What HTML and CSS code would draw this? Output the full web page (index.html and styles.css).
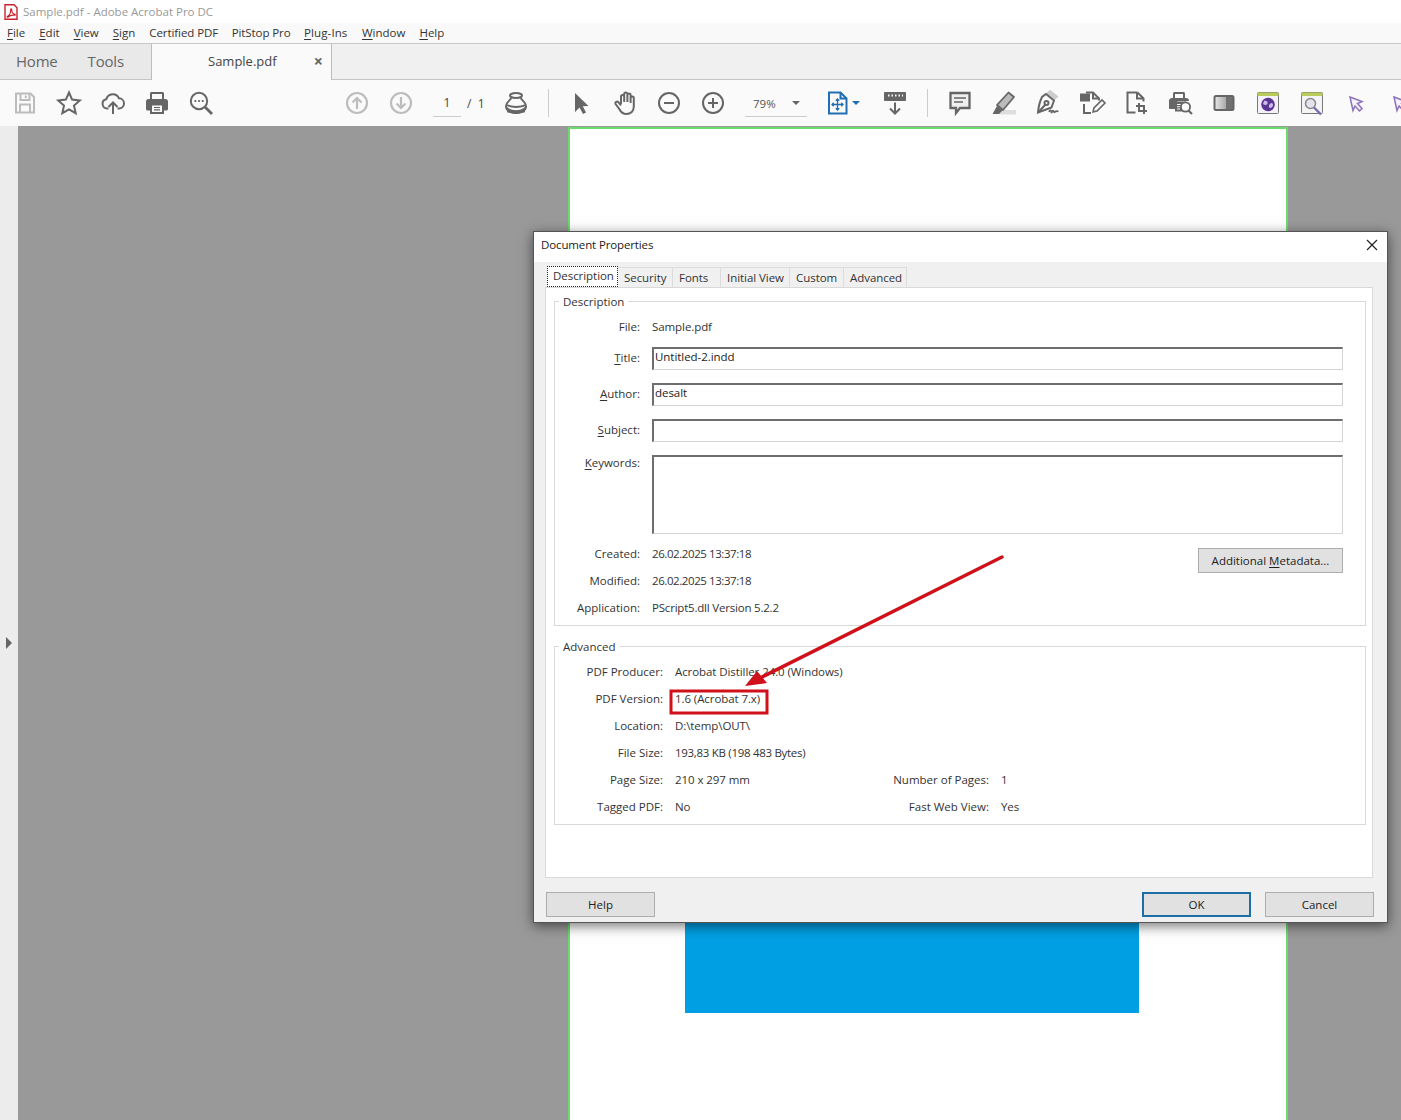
FILE: index.html
```html
<!DOCTYPE html>
<html lang="en">
<head>
<meta charset="utf-8">
<title>Sample.pdf - Adobe Acrobat Pro DC</title>
<link rel="stylesheet" href="styles.css">
</head>
<body>
<div class="app">
  <header class="titlebar">
    <svg class="app-icon" viewBox="0 0 14 16" width="14" height="16"><path d="M1 .7h9l3 3v11.6H1z" fill="#fff" stroke="#c8232c" stroke-width="1.4"/><path d="M3.200 12.600c2-1 3.600-4 3.500-7 0-1 1-1 1 0 0 2.800 1.500 4.600 3.100 4.800.8.200.5 1-.3.900-2.400-.4-4.600.1-6.300 1.700-.6.500-1.500.1-1-.4z" fill="none" stroke="#c8232c" stroke-width="1.100"/></svg>
    <span class="app-title">Sample.pdf - Adobe Acrobat Pro DC</span>
  </header>

  <nav class="menubar">
    <span class="menu-item"><u>F</u>ile</span>
    <span class="menu-item"><u>E</u>dit</span>
    <span class="menu-item"><u>V</u>iew</span>
    <span class="menu-item"><u>S</u>ign</span>
    <span class="menu-item menu-tight">Certified PDF</span>
    <span class="menu-item menu-tight">PitStop Pro</span>
    <span class="menu-item menu-loose"><u>P</u>lug-Ins</span>
    <span class="menu-item"><u>W</u>indow</span>
    <span class="menu-item"><u>H</u>elp</span>
  </nav>

  <div class="tabbar">
    <div class="home-tabs"><span class="home-tab">Home</span><span class="home-tab">Tools</span></div>
    <div class="doc-tab"><span class="doc-name">Sample.pdf</span><span class="doc-close">×</span></div>
  </div>

  <div class="toolbar">
    <span class="slot"><svg viewBox="0 0 24 24" class="ico ico-off"><path d="M3 2.500h14.500l3.500 3.500v15.500H3z"/><path d="M7.500 2.500v6.500h9V2.500M12.800 4.500v2.500M7 21.500v-8h10v8"/></svg></span>
    <span class="slot"><svg viewBox="0 0 24 24" class="ico ico-big"><polygon points="12,1.500 15.100,8.600 22.800,9.400 17,14.600 18.700,22.200 12,18.300 5.300,22.200 7,14.600 1.200,9.400 8.900,8.600"/></svg></span>
    <span class="slot"><svg viewBox="0 0 24 24" class="ico ico-big"><path d="M7.500 17.500H6.200a4.700 4.700 0 0 1-.9-9.300A6.700 6.700 0 0 1 18 7.300a5.100 5.100 0 0 1-.2 10.200h-1.300"/><path d="M12 23V11.500M7.500 16l4.500-4.500 4.500 4.500"/></svg></span>
    <span class="slot"><svg viewBox="0 0 24 24" class="ico-fill"><path d="M5 8V2.500C5 1.700 5.700 1 6.500 1h11c.8 0 1.500.7 1.500 1.500V8h1.500C22 8 23 9 23 10.500V18c0 .8-.7 1.500-1.500 1.500H19V23H5v-3.500H2.500C1.700 19.500 1 18.800 1 18v-7.500C1 9 2 8 3.500 8z"/><path d="M7 3h10v5H7zM7 14.500h10V21H7z" fill="#fafafa"/><path d="M9 16.500h6M9 18.800h6" stroke="#666" stroke-width="1.200"/></svg></span>
    <span class="slot"><svg viewBox="0 0 24 24" class="ico ico-big"><circle cx="10" cy="10" r="8.200"/><path d="M16 16l7 7" stroke-width="2.800"/><path class="dots" d="M6.300 10h.1M10 10h.1M13.700 10h.1"/></svg></span>

    <span class="slot slot-far"><svg viewBox="0 0 24 24" class="ico ico-nav"><circle cx="12" cy="12" r="10"/><path d="M12 18V7M7.500 11.500L12 7l4.500 4.500"/></svg></span>
    <span class="slot"><svg viewBox="0 0 24 24" class="ico ico-nav"><circle cx="12" cy="12" r="10"/><path d="M12 6v11M7.500 12.500L12 17l4.500-4.500"/></svg></span>
    <span class="page-box">1</span>
    <span class="page-total">/&nbsp;&nbsp;1</span>
    <span class="slot"><svg viewBox="0 0 24 24" class="ico"><ellipse cx="12" cy="4.500" rx="6" ry="2.500"/><path d="M7 7c0 2-5 4-5 8 0 5 5 7 10 7s10-2 10-7c0-4-5-6-5-8"/><path d="M3 14c4 2.500 14 2.500 18 0"/><path d="M4 18c4 3 12 3 16 0v2.500L12 22l-8-1.500z" class="solid"/></svg></span>
    <span class="sep"></span>
    <span class="slot"><svg viewBox="0 0 24 24" class="ico-fill"><polygon points="6,2 6,21 10.500,16.500 14,23 17,21.500 13.800,15.200 19.500,15"/></svg></span>
    <span class="slot"><svg viewBox="0 0 24 24" class="ico ico-big"><path d="M8 13V5.500a1.600 1.600 0 0 1 3.200 0V11M11.200 11V3a1.600 1.600 0 0 1 3.200 0v8M14.400 11V4.200a1.600 1.600 0 0 1 3.200 0V12M17.600 12V7a1.600 1.600 0 0 1 3.200 0v8.500c0 4.500-3 7.500-7.500 7.500-4 0-5.500-2-7-5L2.600 13c-1-2 1.600-3.200 3-1.600L8 14.500"/></svg></span>
    <span class="slot"><svg viewBox="0 0 24 24" class="ico ico-big"><circle cx="12" cy="12" r="10"/><path d="M7 12h10"/></svg></span>
    <span class="slot"><svg viewBox="0 0 24 24" class="ico ico-big"><circle cx="12" cy="12" r="10"/><path d="M7 12h10M12 7v10"/></svg></span>
    <span class="zoom-box"><span>79%</span><i class="caret"></i></span>
    <span class="fit-group">
      <svg viewBox="0 0 24 24" class="ico-blue"><path d="M3 1.500h11.500l6 6v15H3z"/><path d="M14.500 1.500v6h6"/><path d="M11.500 8v11M6 13.500h11M9.800 9.700l1.700-1.700 1.700 1.700M9.800 17.300l1.700 1.700 1.700-1.700M7.700 11.800L6 13.500l1.700 1.700M15.300 11.800l1.700 1.700-1.700 1.700" stroke-width="1.300"/></svg>
      <i class="caret caret-blue"></i>
    </span>
    <span class="slot"><svg viewBox="0 0 24 24" class="ico-fill"><rect x="1" y="1" width="22" height="9" rx="1"/><path d="M5 4.500h1.500M8.500 4.500H10M12 4.500h1.500M15.500 4.500H17M19 4.500h1" stroke="#fafafa" stroke-width="2"/><path d="M12 11.500V22.500M7 17.500l5 5 5-5" fill="none" stroke="#666" stroke-width="2"/></svg></span>
    <span class="sep"></span>
    <span class="slot"><svg viewBox="0 0 24 24" class="ico ico-comment"><path d="M2.500 2h19v15h-9.500l-4 5v-5H2.500z"/><path d="M6 7h12M6 11h9" stroke-width="1.300"/></svg></span>
    <span class="slot"><svg viewBox="0 0 24 24" class="ico-fill"><rect x="7" y="19" width="17" height="4.500" fill="#ddd"/><polygon points="5,14 16.500,1.500 22,6 11,19" fill="#bbb" stroke="#666" stroke-width="1.800" stroke-linejoin="round"/><polygon points="5,15 10.500,19.500 7,23 0.500,23"/></svg></span>
    <span class="slot"><svg viewBox="0 0 24 24" class="ico"><path d="M14 0l7 5.500-2.500 2.500-7-5.500z" class="pale"/><path d="M10 3l8 6.500-2.500 7c-4 1.500-8 3-13.500 5C2.500 16 4 10 6 6z"/><path d="M2.500 21l7-7.500"/><circle cx="10.500" cy="12" r="2"/><path d="M13 21c1-2.500 1.800-2.500 2.300 0s1-2.500 2-1.300 .8 2.300 1.700 1.200 1.500-1.200 3.500-.4" stroke-width="1.600"/></svg></span>
    <span class="slot"><svg viewBox="0 0 24 24" class="ico"><path d="M1 3.500h8v6H1z" class="solid"/><path d="M6 1.500h7l6 6v2M4 13v9h7"/><path d="M13 1.500v6h6"/><path d="M13 21l1-4 8-8 3 3-8 8z" stroke-width="1.600"/></svg></span>
    <span class="slot"><svg viewBox="0 0 24 24" class="ico"><path d="M13.500 1.500H3.500v20h8M13.500 1.500l6 6v3M13 1.500v6h6"/><path d="M15 12v8h8M12 15h8v8"/></svg></span>
    <span class="slot"><svg viewBox="0 0 24 24" class="ico-fill"><path d="M5 7V2.500C5 1.700 5.700 1 6.500 1h9c.8 0 1.500.700 1.500 1.500V7h1c2 0 3 1 3 3H11c-2 0-3 1.500-3 3v5H2c-.6 0-1-.4-1-1v-7c0-2 1.500-3 3-3zM7 3v4h8V3z"/><rect x="7" y="10.500" width="11" height="10" fill="#666"/><path d="M9 13.500h5M9 15.800h4M9 18h3" stroke="#fafafa" stroke-width="1.100"/><circle cx="17.500" cy="16" r="4.600" fill="#fafafa" stroke="#666" stroke-width="1.800"/><path d="M20.500 19.500l3.500 3.500" stroke="#666" stroke-width="2.200"/></svg></span>
    <span class="slot"><svg viewBox="0 0 24 24" class="ico-plain"><defs><linearGradient id="grad"><stop offset="0" stop-color="#e8e8e8"/><stop offset=".62" stop-color="#a8a8a8"/><stop offset=".62" stop-color="#707070"/><stop offset="1" stop-color="#707070"/></linearGradient></defs><rect x="2.500" y="5" width="19" height="14" rx="1.500" fill="url(#grad)" stroke="#666" stroke-width="2"/></svg></span>
    <span class="slot"><svg viewBox="0 0 24 24" class="ico-plain"><rect x="1.500" y="1.500" width="21" height="21" rx="1" fill="#f4f2f8" stroke="#777"/><rect x="1.500" y="1.500" width="21" height="3.500" fill="#b8cc5c"/><circle cx="12" cy="13.500" r="6.800" fill="#5b3595"/><path d="M8 10c2.500-1 4 .5 3.500 2.500s-3 1.500-4.500.5zM15.500 12c2 .500 2 3 0 4.500s-3-.500-2.500-2 1.500-2.500 2.500-2.500z" fill="#cdbbe6"/></svg></span>
    <span class="slot"><svg viewBox="0 0 24 24" class="ico-plain"><rect x="1.500" y="1.500" width="21" height="21" rx="1" fill="#f4f4f6" stroke="#777"/><rect x="1.500" y="1.500" width="21" height="3.500" fill="#b8cc5c"/><circle cx="10.500" cy="12.500" r="5" fill="#e4e4ee" stroke="#888" stroke-width="1.500"/><path d="M14 16.500l7 7" stroke="#7b6bb0" stroke-width="2.400"/></svg></span>
    <span class="slot"><svg viewBox="0 0 24 24" class="ico-purple"><path d="M6 6l12 4.500-4.500 2 4.500 5-2.500 2.500-4.500-5-2 4.500z"/></svg></span>
    <span class="slot"><svg viewBox="0 0 24 24" class="ico-purple"><path d="M6 6l12 4.500-4.500 2 4.500 5-2.500 2.500-4.500-5-2 4.500z"/></svg></span>
  </div>

  <main class="workspace">
    <aside class="rail"><i class="rail-arrow"></i></aside>
    <div class="canvas">
      <div class="page"><div class="blue-block"></div></div>
    </div>
  </main>

  <section class="dialog">
    <div class="dialog-title">
      <span class="dialog-name">Document Properties</span>
      <svg class="dialog-close" viewBox="0 0 12 12" width="12" height="12"><path d="M1 1l10 10M11 1L1 11" stroke="#222" stroke-width="1.200"/></svg>
    </div>
    <div class="dialog-body">
      <div class="tabs">
        <span class="tab tab-on"><span>Description</span></span>
        <span class="tab">Security</span>
        <span class="tab">Fonts</span>
        <span class="tab">Initial View</span>
        <span class="tab">Custom</span>
        <span class="tab">Advanced</span>
      </div>
      <div class="panel">
        <div class="group group-desc">
          <span class="legend">Description</span>
          <div class="fields">
            <div class="row row-file"><span class="label">File:</span><span class="value">Sample.pdf</span></div>
            <div class="row"><span class="label"><u>T</u>itle:</span><span class="input">Untitled-2.indd</span></div>
            <div class="row"><span class="label"><u>A</u>uthor:</span><span class="input">desalt</span></div>
            <div class="row"><span class="label"><u>S</u>ubject:</span><span class="input"></span></div>
            <div class="row row-top"><span class="label"><u>K</u>eywords:</span><span class="input input-area"></span></div>
          </div>
          <div class="meta">
            <div class="meta-rows">
              <div class="row row-meta"><span class="label">Created:</span><span class="value num">26.02.2025 13:37:18</span></div>
              <div class="row row-meta"><span class="label">Modified:</span><span class="value num">26.02.2025 13:37:18</span></div>
              <div class="row row-meta"><span class="label">Application:</span><span class="value num-soft">PScript5.dll Version 5.2.2</span></div>
            </div>
            <button class="btn btn-meta" type="button">Additional <u>M</u>etadata...</button>
          </div>
        </div>
        <div class="group group-adv">
          <span class="legend">Advanced</span>
          <div class="adv-grid">
            <span class="label">PDF Producer:</span><span class="value adv-wide">Acrobat Distiller 24.0 (Windows)</span>
            <span class="label">PDF Version:</span><span class="value adv-wide">1.6 (Acrobat 7.x)</span>
            <span class="label">Location:</span><span class="value adv-wide">D:\temp\OUT\</span>
            <span class="label">File Size:</span><span class="value adv-wide num-mid">193,83 KB (198 483 Bytes)</span>
            <span class="label">Page Size:</span><span class="value">210 x 297 mm</span><span class="label">Number of Pages:</span><span class="value">1</span>
            <span class="label">Tagged PDF:</span><span class="value">No</span><span class="label">Fast Web View:</span><span class="value">Yes</span>
          </div>
        </div>
      </div>
      <div class="dialog-foot">
        <button class="btn btn-foot" type="button">Help</button>
        <span class="foot-right">
          <button class="btn btn-foot btn-ok" type="button">OK</button>
          <button class="btn btn-foot" type="button">Cancel</button>
        </span>
      </div>
    </div>
  </section>

  <svg class="annotation" viewBox="0 0 1401 1120" width="1401" height="1120">
    <rect x="671" y="691" width="96" height="22" fill="none" stroke="#d0101a" stroke-width="3"/>
    <path d="M1002 557L760 678" stroke="#d0101a" stroke-width="3.400" stroke-linecap="round"/>
    <polygon points="745,686 757,671 767,683" fill="#d0101a"/>
  </svg>
</div>
</body>
</html>
```

FILE: styles.css
```css
* { box-sizing: border-box; }
html, body { margin: 0; padding: 0; }
body { font-family: "Open Sans", "Noto Sans", "Liberation Sans", sans-serif; font-size: 11.5px; color: #222; background: #999; }
u { text-underline-offset: 2px; text-decoration-thickness: 1px; }

.app { position: relative; width: 1401px; height: 1120px; overflow: hidden; display: flex; flex-direction: column; }

.titlebar { height: 23px; background: #fff; display: flex; align-items: center; padding-left: 4px; gap: 5px; flex: none; }
.app-icon { flex: none; }
.app-title { color: #999; font-size: 11.5px; }

.menubar { height: 21px; background: #f9f9f9; border-bottom: 1px solid #c8c8c8; display: flex; align-items: center; padding: 0 0 2px 7px; flex: none; font-size: 11.5px; color: #333; }
.menu-item { margin-right: 14px; white-space: nowrap; }
.menu-tight { letter-spacing: -.08px; margin-right: 13.500px; }
.menu-loose { margin-right: 14.500px; letter-spacing: .1px; }

.tabbar { height: 36px; background: #f0f0f0; border-bottom: 1px solid #c4c4c4; display: flex; flex: none; }
.home-tabs { width: 151px; background: #e9e9e9; display: flex; align-items: center; padding: 0 0 2px 16px; gap: 30px; }
.home-tab { font-size: 15px; color: #666; letter-spacing: -.2px; }
.doc-tab { width: 181px; height: 36px; background: #fafafa; border-left: 1px solid #bdbdbd; border-right: 1px solid #bdbdbd; display: flex; align-items: center; padding: 0 0 2px 56px; }
.doc-name { font-size: 13px; color: #444; }
.doc-close { margin-left: 37px; font-size: 16px; font-weight: 700; color: #666; }

.toolbar { height: 46px; background: #fafafa; display: flex; align-items: center; padding-left: 3px; flex: none; white-space: nowrap; overflow: hidden; }
.slot { width: 44px; flex: none; display: flex; justify-content: center; align-items: center; }
.slot-far { margin-left: 112px; }
.slot svg { width: 24px; height: 24px; display: block; overflow: visible; }
.ico, .ico-blue, .ico-purple { fill: none; stroke: #666; stroke-width: 2; }
.ico-off { stroke: #bcbcbc; }
.ico-nav { stroke: #bdbdbd; stroke-width: 2.2; }
.ico-fill { fill: #666; }
.ico-plain { fill: none; }
.ico .solid { fill: #666; }
.ico .pale { fill: #ccc; stroke: #ccc; }
.ico .dots { stroke-width: 2.2; stroke-linecap: round; }
.ico-comment { fill: #efefef; stroke-width: 2.3; }
.ico-blue { stroke: #1f6fb2; width: 24px; height: 24px; display: block; flex: none; }
.ico-purple { stroke: #8d72b8; fill: #f6f2fb; stroke-width: 1.500; }
.page-box { width: 28px; flex: none; margin-left: 10px; height: 27px; line-height: 26px; border-bottom: 1px solid #ccc; text-align: center; font-size: 12px; color: #444; align-self: flex-start; margin-top: 10px; }
.page-total { width: 33px; flex: none; padding-left: 6px; font-size: 12px; color: #444; }
.sep { width: 1px; height: 28px; background: #ccc; margin: 0 10px; flex: none; }
.zoom-box { width: 62px; flex: none; margin-left: 10px; height: 27px; border-bottom: 1px solid #ccc; display: flex; align-items: center; justify-content: space-between; padding: 0 7px 0 8px; font-size: 11.5px; color: #555; align-self: flex-start; margin-top: 10px; }
.caret { width: 0; height: 0; border-left: 4px solid transparent; border-right: 4px solid transparent; border-top: 4px solid #666; display: block; flex: none; }
.caret-blue { border-top-color: #1f6fb2; }
.fit-group { width: 57px; margin-left: 9px; padding-left: 10px; display: flex; align-items: center; gap: 2px; flex: none; }

.workspace { flex: 1; display: flex; min-height: 0; }
.rail { width: 18px; background: #ececec; display: flex; align-items: center; flex: none; padding-left: 6px; padding-top: 40px; }
.rail-arrow { width: 0; height: 0; border-top: 6px solid transparent; border-bottom: 6px solid transparent; border-left: 6px solid #666; display: block; }
.canvas { flex: 1; background: #999; padding: 1px 0 0 550px; min-width: 0; }
.page { width: 720px; height: 1000px; background: #fff; border: 2px solid #6adc6a; border-bottom: 0; padding: 572px 0 0 115px; }
.blue-block { width: 454px; height: 312px; background: #009fe3; }

.dialog { position: absolute; left: 533px; top: 231px; width: 855px; height: 692px; border: 1px solid #555; background: #f0f0f0; box-shadow: 0 3px 12px rgba(0,0,0,.55); display: flex; flex-direction: column; }
.dialog-title { height: 30px; background: #fff; display: flex; align-items: center; justify-content: space-between; padding: 0 9px 0 7px; flex: none; }
.dialog-name { margin-top: -5px; letter-spacing: -.13px; }
.dialog-close { margin-top: -4px; }
.dialog-body { flex: 1; padding: 0 14px 0 11px; display: flex; flex-direction: column; min-height: 0; }
.tabs { display: grid; grid-template-columns: 72px 55px 48px 69px 54px 63px; height: 25px; padding-left: 1px; align-items: end; }
.tab { height: 20px; background: #f0f0f0; border: 1px solid #dcdcdc; border-left: 0; border-bottom: 0; padding-left: 6px; line-height: 20px; white-space: nowrap; color: #333; letter-spacing: -.05px; }
.tab-on { height: 21px; align-self: start; margin: 4px 0 -1px 1px; background: #fff; border: 1px dotted #222; padding-left: 5px; line-height: 18px; position: relative; z-index: 1; }
.panel { height: 591px; background: #fff; border: 1px solid #d9d9d9; padding: 13px 0 0 8px; flex: none; }
.group { position: relative; width: 812px; border: 1px solid #d9d9d9; }
.group-desc { height: 325px; }
.group-adv { height: 179px; margin-top: 20px; }
.legend { position: absolute; left: 4px; top: -7px; background: #fff; padding: 0 4px; line-height: 14px; color: #333; }
.fields { display: flex; flex-direction: column; gap: 13px; padding-top: 12px; }
.row { display: grid; grid-template-columns: 85px 691px; column-gap: 12px; align-items: center; }
.row-file { height: 20px; align-items: end; line-height: 14px; }
.row-top { align-items: start; }
.label { text-align: right; color: #333; white-space: nowrap; padding-bottom: 2px; }
.value { color: #333; white-space: nowrap; padding-bottom: 2px; letter-spacing: -.08px; }
.row-file .label, .row-file .value, .row-top .label { padding-bottom: 0; }
.value.num { letter-spacing: -.42px; }
.value.num-mid { letter-spacing: -.3px; }
.value.num-soft { letter-spacing: -.2px; }
.input { height: 23px; border: 1px solid #d4d4d4; border-top: 2px solid #6e6e6e; border-left: 2px solid #6e6e6e; padding-left: 1px; line-height: 16px; background: #fff; color: #222; letter-spacing: -.05px; }
.input-area { height: 79px; }
.meta { display: flex; justify-content: space-between; align-items: flex-start; padding: 7px 22px 0 0; }
.row-meta { height: 27px; }
.meta-rows { width: 400px; }
.meta-rows .row { grid-template-columns: 85px 303px; }
.btn { font: inherit; color: #222; background: #e1e1e1; border: 1px solid #adadad; padding: 0; }
.btn-meta { width: 145px; height: 25px; margin-top: 7px; }
.adv-grid { display: grid; grid-template-columns: 108px 195px 107px 100px; grid-auto-rows: 27px; column-gap: 12px; align-items: center; padding-top: 12px; }
.adv-wide { grid-column: 2 / 5; }
.dialog-foot { display: flex; justify-content: space-between; padding: 14px 0 0 1px; margin-right: -1px; }
.foot-right { display: flex; gap: 14px; }
.btn-foot { width: 109px; height: 25px; }
.btn-ok { border: 2px solid #1c6ea4; }

.annotation { position: absolute; left: 0; top: 0; pointer-events: none; }
```
